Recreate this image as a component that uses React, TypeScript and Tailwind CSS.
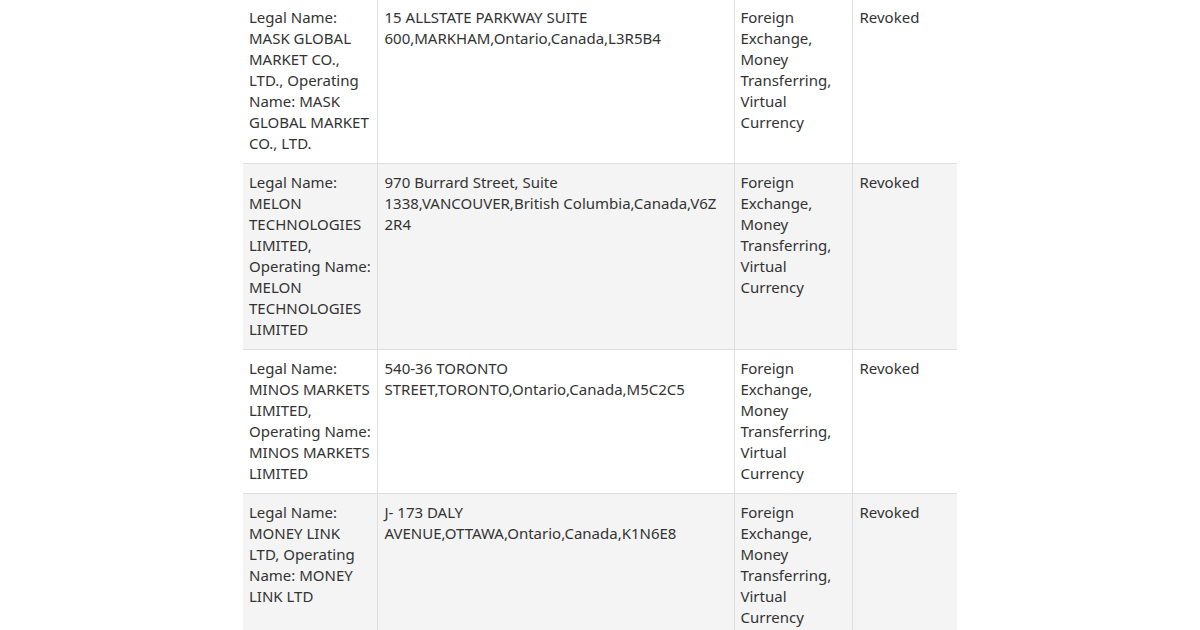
import * as React from "react";

type Row = {
  name: string;
  address: string;
  activities: string;
  status: string;
};

const rows: Row[] = [
  {
    name: "Legal Name: MASK GLOBAL MARKET CO., LTD., Operating Name: MASK GLOBAL MARKET CO., LTD.",
    address: "15 ALLSTATE PARKWAY SUITE 600,MARKHAM,Ontario,Canada,L3R5B4",
    activities: "Foreign Exchange, Money Transferring, Virtual Currency",
    status: "Revoked",
  },
  {
    name: "Legal Name: MELON TECHNOLOGIES LIMITED, Operating Name: MELON TECHNOLOGIES LIMITED",
    address: "970 Burrard Street, Suite 1338,VANCOUVER,British Columbia,Canada,V6Z 2R4",
    activities: "Foreign Exchange, Money Transferring, Virtual Currency",
    status: "Revoked",
  },
  {
    name: "Legal Name: MINOS MARKETS LIMITED, Operating Name: MINOS MARKETS LIMITED",
    address: "540-36 TORONTO STREET,TORONTO,Ontario,Canada,M5C2C5",
    activities: "Foreign Exchange, Money Transferring, Virtual Currency",
    status: "Revoked",
  },
  {
    name: "Legal Name: MONEY LINK LTD, Operating Name: MONEY LINK LTD",
    address: "J- 173 DALY AVENUE,OTTAWA,Ontario,Canada,K1N6E8",
    activities: "Foreign Exchange, Money Transferring, Virtual Currency",
    status: "Revoked",
  },
];

export default function App() {
  return (
    <div className="h-[630px] w-[1200px] overflow-hidden bg-white font-['Noto_Sans',sans-serif] text-[15px] leading-[21px] text-[#333]">
      <table className="-mt-[2px] ml-[243px] w-[714px] table-fixed border-collapse">
        <colgroup>
          <col className="w-[134px]" />
          <col className="w-[357px]" />
          <col className="w-[118px]" />
          <col className="w-[105px]" />
        </colgroup>
        <tbody>
          {rows.map((r, i) => (
            <tr
              key={r.name}
              className={
                i % 2 === 0
                  ? "border-t border-[#dedede] bg-white"
                  : "border-t border-[#dedede] bg-[#f4f4f4]"
              }
            >
              <td className="pt-2 pb-[9px] pl-[6px] pr-[4px] align-top">{r.name}</td>
              <td className="border-l border-[#dedede] pt-2 pb-[9px] pl-[7px] pr-[6px] align-top break-words">
                {r.address}
              </td>
              <td className="border-l border-[#dedede] px-[6px] pt-2 pb-[9px] align-top">
                {r.activities}
              </td>
              <td className="border-l border-[#dedede] pt-2 pb-[9px] pl-[7px] pr-[6px] align-top">
                {r.status}
              </td>
            </tr>
          ))}
        </tbody>
      </table>
    </div>
  );
}
